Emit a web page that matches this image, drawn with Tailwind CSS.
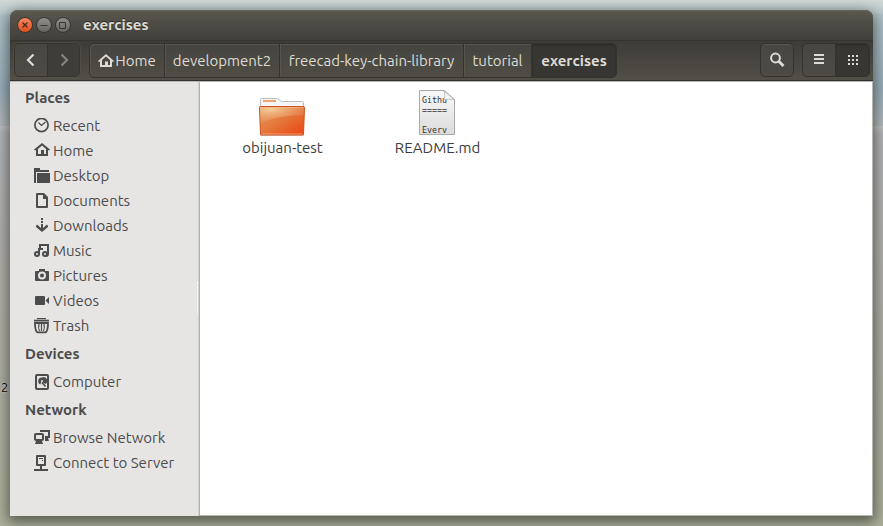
<!DOCTYPE html>
<html lang="en">
<head>
  <meta charset="UTF-8" />
  <meta name="viewport" content="width=device-width, initial-scale=1.0"/>
  <title>exercises</title>
  <script src="https://cdn.jsdelivr.net/npm/@tailwindcss/browser@4"></script>
</head>
<body class="relative flex min-h-screen overflow-hidden bg-[#aaad98] px-[10px] py-[10px] font-['Ubuntu','Noto_Sans',sans-serif] text-[15px] leading-5 text-[#4c4c4c]">

  <!-- wallpaper: sky, sea, foam line and sand -->
  <div class="absolute inset-0 flex flex-col" aria-hidden="true">
    <div class="h-[14px] bg-linear-to-b from-[#d3d9d7] to-[#b9c9cd]"></div>
    <div class="h-[76px] bg-linear-to-b from-[#b0c3c9] to-[#9aafbd]"></div>
    <div class="h-[36px] bg-linear-to-b from-[#9aafbd] to-[#b5babd]"></div>
    <div class="h-[8px] bg-linear-to-b from-[#c3c5c6] to-[#b4b5b9]"></div>
    <div class="h-[160px] bg-linear-to-b from-[#b4b5b9] to-[#b2b0ab]"></div>
    <div class="grow bg-linear-to-b from-[#b2b0ab] to-[#adb19c]"></div>
  </div>
  <span class="absolute top-[377px] left-[1px] text-[13px] text-black [text-shadow:0_0_2px_#fff]">2</span>

  <div class="relative flex grow flex-col rounded-t-lg shadow-[0_4px_14px_2px_rgba(25,30,20,0.6)]">

    <header class="rounded-t-lg border-b border-[#33322e] bg-[#3c3b37] text-[#dfdbd2] [text-shadow:0_-1px_0_#2b2a27]">
      <div class="flex h-[30px] items-center rounded-t-lg border-t border-[#66645b] bg-linear-to-b from-[#59574e] to-[#403f3a] pb-[2px] pl-[7px]">
        <button aria-label="Close" class="mr-[3px]">
          <svg class="block size-4" viewBox="0 0 16 16"><defs><linearGradient id="cl" x2="0" y2="1"><stop stop-color="#f58a60"/><stop offset="1" stop-color="#e04e1c"/></linearGradient></defs><circle cx="8" cy="8" r="7.5" fill="url(#cl)" stroke="#36352f"/><path d="M5.500 5.500l5 5M10.500 5.500l-5 5" stroke="#4a2a1c" stroke-width="1.300"/></svg>
        </button>
        <button aria-label="Minimize" class="mr-[3px]">
          <svg class="block size-4" viewBox="0 0 16 16"><defs><linearGradient id="gr" x2="0" y2="1"><stop stop-color="#92908a"/><stop offset="1" stop-color="#66645d"/></linearGradient></defs><circle cx="8" cy="8" r="7.500" fill="url(#gr)" stroke="#36352f"/><path d="M4.500 8.500h7" stroke="#36352f"/></svg>
        </button>
        <button aria-label="Maximize">
          <svg class="block size-4" viewBox="0 0 16 16"><circle cx="8" cy="8" r="7.500" fill="url(#gr)" stroke="#36352f"/><path d="M4.500 5.500h6v6h-6z" fill="none" stroke="#36352f"/></svg>
        </button>
        <h1 class="ml-3 font-bold">exercises</h1>
      </div>

      <div class="flex h-10 items-start border-t border-[#35342f] bg-linear-to-b from-[#3d3c37] to-[#524f46] pt-[2px] pr-[3px] pl-1">
        <div class="flex h-[34px] overflow-hidden rounded-[5px] border border-[#34332f] bg-linear-to-b from-[#474641] to-[#4d4b44] shadow-[0_0_0_1px_#57554c]/50">
          <button aria-label="Back" class="grid w-8 place-items-center"><svg class="size-4" viewBox="0 0 16 16" fill="none" stroke="#dfdbd2" stroke-width="2.200"><path d="M10.500 2.500L5 8l5.500 5.500"/></svg></button>
          <button aria-label="Forward" class="grid w-8 place-items-center border-l border-[#35342f] bg-[#3e3d39]"><svg class="size-4" viewBox="0 0 16 16" fill="none" stroke="#85837b" stroke-width="2.200"><path d="M5.500 2.500L11 8l-5.500 5.500"/></svg></button>
        </div>

        <nav aria-label="Path" class="ml-[9px] flex h-[35px] rounded-[5px] border border-[#34332f] bg-linear-to-b from-[#45443f] to-[#4f4d45] shadow-[inset_1px_1px_0_#57554c]">
          <button class="flex w-[75px] items-center justify-center gap-[1px] border-r border-[#34332f]"><svg class="size-4 shrink-0" viewBox="0 0 16 16" fill="#dfdbd2"><path fill-rule="evenodd" d="M8 1L0 8l1 1 1-.5V14h12V8.500l1 .5 1-1zM8 3.400l4 3.500V12h-2V8.500H7V12H4V6.900z"/></svg>Home</button>
          <button class="w-[115px] border-r border-[#34332f] shadow-[inset_1px_0_0_#57554c]">development2</button>
          <button class="w-[184px] border-r border-[#34332f] shadow-[inset_1px_0_0_#57554c]">freecad-key-chain-library</button>
          <button class="w-[68px] border-r border-[#34332f] shadow-[inset_1px_0_0_#57554c]">tutorial</button>
          <button class="w-[84px] rounded-r-[4px] bg-[#373632] pt-[1px] font-bold shadow-[inset_0_1px_2px_#2c2b28]">exercises</button>
        </nav>

        <button aria-label="Search" class="ml-auto grid h-[34px] w-[34px] place-items-center rounded-[5px] border border-[#33322e] bg-linear-to-b from-[#474641] to-[#4d4b44] shadow-[inset_0_1px_0_#57554c]">
          <svg class="size-4" viewBox="0 0 16 16" fill="none" stroke="#dfdbd2"><circle cx="6.500" cy="6" r="4.400" stroke-width="2"/><path d="M9.500 9l5 5" stroke-width="2.800"/></svg>
        </button>
        <div class="ml-2 flex h-[34px] overflow-hidden rounded-[5px] border border-[#33322e] bg-linear-to-b from-[#474641] to-[#4d4b44]">
          <button aria-label="List view" class="grid w-8 place-items-center"><svg class="size-4" viewBox="0 0 16 16" fill="#dfdbd2"><path d="M3 2h10v2H3zM3 6h10v2H3zM3 10h10v2H3z"/></svg></button>
          <button aria-label="Icon view" class="grid w-[34px] place-items-center bg-[#373632] pl-[2px] shadow-[inset_0_1px_2px_#2c2b28]"><svg class="size-4" viewBox="0 0 16 16" fill="#dfdbd2"><path d="M3 3h2v2H3zM7 3h2v2H7zM11 3h2v2h-2zM3 7h2v2H3zM7 7h2v2H7zM11 7h2v2h-2zM3 11h2v2H3zM7 11h2v2H7zM11 11h2v2h-2z"/></svg></button>
        </div>
      </div>
    </header>

    <div class="flex grow border-t border-[#b9b7b3]">
      <aside class="relative w-[190px] shrink-0 border-r border-[#b3b0ac] bg-[#e6e5e4] shadow-[inset_-1px_0_0_#d3d1ce]">
        <h2 class="flex h-[31px] items-center pl-[15px] font-bold">Places</h2>
        <ul class="[&_a]:flex [&_a]:h-[25px] [&_a]:items-center [&_a]:gap-[3px] [&_a]:pl-6 [&_svg]:size-4 [&_svg]:shrink-0">
          <li><a href="#"><svg viewBox="0 0 16 16" fill="none" stroke="#4c4c4c"><circle cx="7.500" cy="7" r="6.600" stroke-width="1.700"/><path d="M4.500 4.500l3 3 4-3.500" stroke-width="1.200"/></svg>Recent</a></li>
          <li><a href="#"><svg viewBox="0 0 16 16" fill="#4c4c4c"><path fill-rule="evenodd" d="M8 0L0 6.500l1 1 1-.5v6h12V7l1 .5 1-1zM8 2.500l4 3.400V11h-2V7H7v4H4V5.900z"/></svg>Home</a></li>
          <li><a href="#"><svg viewBox="0 0 16 16" fill="#4c4c4c"><path d="M0 0h6v2h9v2H2v11H0z"/><path d="M3 5h13v10H3z"/></svg>Desktop</a></li>
          <li><a href="#"><svg viewBox="0 0 16 16" fill="#4c4c4c"><path fill-rule="evenodd" d="M3 0h7l4 4v10q0 1-1 1H3q-1 0-1-1V1q0-1 1-1zM4 2v11h8V6H9V2z"/></svg>Documents</a></li>
          <li><a href="#"><svg viewBox="0 0 16 16" fill="#4c4c4c"><path d="M7 0h2v2H7zM7 3h2v2H7z"/><path d="M7 6h2v4l4-3.500 1 1.500v1l-6 5-6-5V8l1-1.500L7 10z"/></svg>Downloads</a></li>
          <li><a href="#"><svg viewBox="0 0 16 16" fill="none" stroke="#4c4c4c" stroke-width="2"><circle cx="3" cy="11" r="2"/><circle cx="11" cy="11" r="2"/><path d="M5 11V6h4M6 7V2h8v9q0 2-2 2"/></svg>Music</a></li>
          <li><a href="#"><svg viewBox="0 0 16 16" fill="#4c4c4c"><path fill-rule="evenodd" d="M5 1h6v2h3q1 0 1 1v8q0 1-1 1H2q-1 0-1-1V4q0-1 1-1h3zM8 3.500a4 4 0 100 8 4 4 0 000-8z"/><circle cx="8" cy="7.500" r="2"/></svg>Pictures</a></li>
          <li><a href="#"><svg viewBox="0 0 16 16" fill="#4c4c4c"><path d="M2 3h8q1 0 1 1v7q0 1-1 1H2q-1 0-1-1V4q0-1 1-1zM11.500 7.500L15 4v7z"/></svg>Videos</a></li>
          <li><a href="#"><svg viewBox="0 0 16 16" fill="none" stroke="#4c4c4c"><path d="M3 .5h9" stroke-width="1.300"/><path d="M0 2.600h15" stroke-width="1.800"/><path d="M1 5q0 6 1.500 8.500.5.800 1.300.8h7.400q.8 0 1.300-.8Q14 11 14 5z" stroke-width="1.800"/><path d="M5 6Q4 9.500 5.500 13M7.500 6v7M10 6q1 3.500-.5 7" stroke-width="1.200"/></svg>Trash</a></li>
        </ul>
        <h2 class="flex h-[31px] items-center pl-[15px] font-bold">Devices</h2>
        <ul class="[&_a]:flex [&_a]:h-[25px] [&_a]:items-center [&_a]:gap-[3px] [&_a]:pl-6 [&_svg]:size-4 [&_svg]:shrink-0">
          <li><a href="#"><svg viewBox="0 0 16 16" fill="none" stroke="#4c4c4c"><rect x="2" y="1" width="12" height="14" rx="1" stroke-width="2"/><path d="M8 3.500a3.700 3.700 0 00-3.800 3.700C4.200 9 5 10 6.500 10.500L7 8l2 .500 2.500 1.500A3.700 3.700 0 008 3.500z" fill="#4c4c4c" stroke="none"/><circle cx="8" cy="7" r="1" fill="#e6e5e4" stroke="none"/><path d="M8 8.500l3.500 4" stroke-width="1.600"/></svg>Computer</a></li>
        </ul>
        <h2 class="flex h-[31px] items-center pl-[15px] font-bold">Network</h2>
        <ul class="[&_a]:flex [&_a]:h-[25px] [&_a]:items-center [&_a]:gap-[3px] [&_a]:pl-6 [&_svg]:size-4 [&_svg]:shrink-0">
          <li><a href="#"><svg viewBox="0 0 16 16" fill="none" stroke="#4c4c4c" stroke-width="2"><rect x="1" y="4" width="8" height="6" rx="1"/><path d="M7 2V1h8v6h-4"/><path d="M2 11h6l1 3H1zM11 8h3l1 3h-4z" fill="#4c4c4c" stroke="none"/></svg>Browse Network</a></li>
          <li><a href="#"><svg viewBox="0 0 16 16" fill="#4c4c4c"><path fill-rule="evenodd" d="M3 0h8q1 0 1 1v9q0 1-1 1H8v3h6v2H0v-2h6v-3H3q-1 0-1-1V1q0-1 1-1zM4 2v7h6V2z"/><path d="M5 3h4v1H5zM8 5h1v1H8z"/></svg>Connect to Server</a></li>
        </ul>
        <!-- resize grip -->
        <div class="absolute top-[200px] -right-[1px] h-[32px] w-[3px] border-l border-dotted border-white"></div>
      </aside>

      <main class="flex grow items-start border-r border-b border-[#b5b8b0] bg-white pt-[6px] pl-[5px] text-[#3c3c3c]">
        <a href="#" class="flex w-[155px] flex-col items-center">
          <svg class="h-[50px] w-12" viewBox="0 0 48 50">
            <defs>
              <linearGradient id="fo" x2="1" y2="1"><stop stop-color="#e09a5c"/><stop offset=".5" stop-color="#e5763a"/><stop offset="1" stop-color="#ea4310"/></linearGradient>
              <radialGradient id="fg" cx=".25" cy=".15" r=".75"><stop stop-color="#f6cf94" stop-opacity=".9"/><stop offset="1" stop-color="#f0a060" stop-opacity="0"/></radialGradient>
            </defs>
            <path d="M1.500 22v-10.500q0-1 1-1h16l4 3h21q1 0 1 1V22z" fill="#f5f5f5" stroke="#bdbdbd"/>
            <path d="M4 12h13v2H4z" fill="#f2a26c"/>
            <path d="M1 46.500h44v1.500H1z" fill="#000" opacity=".18"/>
            <path d="M.5 19.500q0-1 1-1h43q1 0 1 1L44.500 46q0 1-1 1h-41q-1 0-1-1z" fill="url(#fo)" stroke="#cb5221"/>
            <path d="M1 19h44v8Q21 27 1.500 35z" fill="url(#fg)"/>
            <path d="M1 19h44v8Q21 27 1.500 35z" fill="#fff" opacity=".1"/>
            <path d="M2 19.500h42M2.500 46h41" stroke="#f9b58a" opacity=".7"/>
          </svg>
          <span>obijuan-test</span>
        </a>
        <a href="#" class="flex w-[155px] flex-col items-center">
          <svg class="h-[50px] w-12" viewBox="0 0 48 50">
            <defs><linearGradient id="pg" x2="0" y2="1"><stop stop-color="#f8f8f8"/><stop offset="1" stop-color="#dcdcdc"/></linearGradient></defs>
            <path d="M5.500 2.500h25l10 9v35h-35z" fill="url(#pg)" stroke="#a9a9a9"/>
            <g font-family="DejaVu Sans Mono" font-size="8.300" fill="#333">
              <text x="8" y="15">Githu</text>
              <text x="8" y="25">=====</text>
              <text x="8" y="45">Everv</text>
            </g>
            <path d="M30 3q2 5 0 9 5-2 10.500 0z" fill="#f6f6f6" fill-opacity=".9" stroke="#b5b5b5" stroke-width=".8"/>
          </svg>
          <span>README.md</span>
        </a>
      </main>
    </div>
  </div>
</body>
</html>
